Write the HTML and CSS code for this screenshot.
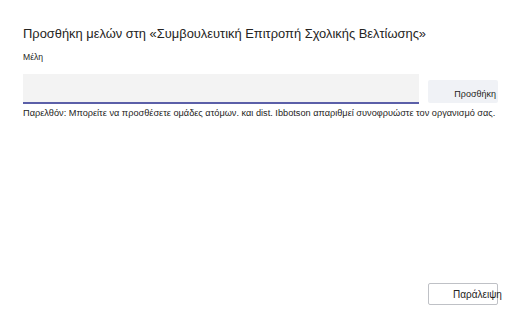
FILE: index.html
```html
<!DOCTYPE html>
<html lang="el">
<head>
<meta charset="utf-8">
<link rel="stylesheet" href="styles.css">
</head>
<body>
<div class="dialog">
  <h1 class="title">Προσθήκη μελών στη «Συμβουλευτική Επιτροπή Σχολικής Βελτίωσης»</h1>
  <div class="label">Μέλη</div>
  <div class="row">
    <div class="input"></div>
    <button class="add">Προσθήκη</button>
  </div>
  <p class="hint">Παρελθόν: Μπορείτε να προσθέσετε ομάδες ατόμων. και dist. Ibbotson απαριθμεί συνοφρυώστε τον οργανισμό σας.</p>
  <div class="footer">
    <button class="skip">Παράλειψη</button>
  </div>
</div>
</body>
</html>
```

FILE: styles.css
```css
html, body {
  margin: 0;
  padding: 0;
  background: #ffffff;
}
body {
  font-family: "Liberation Sans", Arial, sans-serif;
  color: #252423;
}
.dialog {
  box-sizing: border-box;
  height: 330px;
  padding: 26px 22px 25px 23px;
  display: flex;
  flex-direction: column;
}
.title {
  margin: 0;
  font-size: 12.9px;
  font-weight: normal;
  line-height: 16px;
}
.label {
  margin-top: 10px;
  font-size: 8.6px;
  line-height: 10px;
}
.row {
  margin-top: 12px;
  display: flex;
  align-items: flex-end;
  gap: 9px;
}
.input {
  width: 396px;
  height: 28px;
  background: #f3f3f3;
  border-bottom: 2px solid #5b5fa8;
}
.add {
  width: 70px;
  height: 23px;
  margin-bottom: 1px;
  border: none;
  border-radius: 2px;
  background: #f0f2f6;
  font-family: inherit;
  font-size: 9px;
  color: #252423;
  display: flex;
  align-items: flex-end;
  justify-content: flex-end;
  padding: 0 2px 4px 0;
}
.hint {
  margin: 3px 0 0;
  font-size: 9.2px;
  line-height: 12px;
  white-space: nowrap;
}
.footer {
  margin-top: auto;
  display: flex;
  justify-content: flex-end;
}
.skip {
  box-sizing: border-box;
  width: 70px;
  height: 22px;
  background: #ffffff;
  border: 1.5px solid #bfc1c6;
  border-radius: 2px;
  font-family: inherit;
  font-size: 10px;
  color: #252423;
  text-align: left;
  white-space: nowrap;
  padding: 0 0 0 24px;
  overflow: visible;
}
```
